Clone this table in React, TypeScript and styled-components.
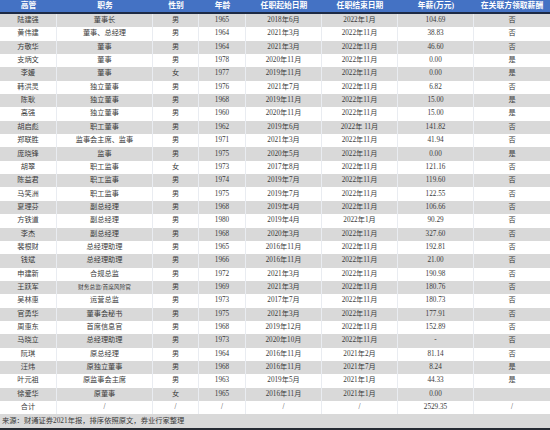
import React from "react";
import styled, { createGlobalStyle } from "styled-components";

const Global = createGlobalStyle`
  html, body { margin: 0; padding: 0; background: #ffffff; }
  body { width: 550px; height: 430px; overflow: hidden; }
`;

const WIDTHS = [57, 96, 46, 47, 76, 76, 76, 76];

const Sheet = styled.div`
  width: 550px;
  height: 430px;
  display: flex;
  flex-direction: column;
  font-family: "Liberation Serif", "Noto Sans CJK SC", serif;
  color: #3a3a3a;
  border-bottom: 2px solid #262b33;
  box-sizing: border-box;
  overflow: hidden;
`;

const HeaderRow = styled.div`
  display: flex;
  height: 12px;
  background: #4472c4;
  border-bottom: 2px solid #1d2a44;
  flex: none;
`;

const HeadCell = styled.div<{ $w: number }>`
  flex: 0 0 ${(p) => p.$w}px;
  display: flex;
  align-items: center;
  justify-content: center;
  color: #ffffff;
  font-weight: bold;
  font-size: 7.8px;
  line-height: 1;
  white-space: nowrap;
`;

const Row = styled.div<{ $shade: boolean }>`
  display: flex;
  height: 13.35px;
  flex: none;
  background: ${(p) => (p.$shade ? "#d9d9d9" : "#ffffff")};
`;

const Cell = styled.div<{ $w: number; $small?: boolean }>`
  flex: 0 0 ${(p) => p.$w}px;
  box-sizing: border-box;
  display: flex;
  align-items: center;
  justify-content: center;
  font-size: ${(p) => (p.$small ? "5.7px" : "7.2px")};
  line-height: 1;
  white-space: nowrap;
  border-right: 1px solid #e9ecf1;
  &:last-child { border-right: none; }
`;

const SourceRow = styled.div`
  display: flex;
  align-items: center;
  height: 13.35px;
  flex: none;
  background: #d9d9d9;
  padding-left: 2px;
  font-size: 7.3px;
  line-height: 1;
  white-space: nowrap;
`;

const headers = ["高管", "职务", "性别", "年龄", "任职起始日期", "任职结束日期", "年薪(万元)", "在关联方领取薪酬"];

const rows: string[][] = [
  ["陆建强", "董事长", "男", "1965", "2018年6月", "2022年1月", "104.69", "否"],
  ["黄伟建", "董事、总经理", "男", "1964", "2021年3月", "2022年11月", "38.83", "否"],
  ["方敬华", "董事", "男", "1964", "2021年3月", "2022年11月", "46.60", "否"],
  ["支炳文", "董事", "男", "1978", "2020年11月", "2022年11月", "0.00", "是"],
  ["李媛", "董事", "女", "1977", "2019年11月", "2022年11月", "0.00", "是"],
  ["韩洪灵", "独立董事", "男", "1976", "2021年7月", "2022年11月", "6.82", "否"],
  ["陈耿", "独立董事", "男", "1968", "2019年11月", "2022年11月", "15.00", "是"],
  ["高强", "独立董事", "男", "1960", "2020年11月", "2022年11月", "15.00", "是"],
  ["胡启彪", "职工董事", "男", "1962", "2019年6月", "2022年 11月", "141.82", "否"],
  ["郑联胜", "监事会主席、监事", "男", "1971", "2021年3月", "2022年11月", "41.94", "否"],
  ["庞晓锋", "监事", "男", "1975", "2020年5月", "2022年11月", "0.00", "是"],
  ["胡翠", "职工监事", "女", "1973", "2017年8月", "2022年11月", "121.16", "否"],
  ["陈益君", "职工监事", "男", "1974", "2019年7月", "2022年11月", "119.60", "否"],
  ["马笑洲", "职工监事", "男", "1975", "2019年7月", "2022年11月", "122.55", "否"],
  ["夏理芬", "副总经理", "男", "1968", "2019年4月", "2022年11月", "106.66", "否"],
  ["方铁道", "副总经理", "男", "1980", "2019年4月", "2022年1月", "90.29", "否"],
  ["李杰", "副总经理", "男", "1968", "2020年3月", "2022年11月", "327.60", "否"],
  ["裴根财", "总经理助理", "男", "1965", "2016年11月", "2022年11月", "192.81", "否"],
  ["钱斌", "总经理助理", "男", "1966", "2016年11月", "2022年11月", "21.00", "否"],
  ["申建新", "合规总监", "男", "1972", "2021年3月", "2022年11月", "190.98", "否"],
  ["王跃军", "财务总监/首席风险官", "男", "1969", "2021年3月", "2022年11月", "180.76", "否"],
  ["吴林惠", "运营总监", "男", "1973", "2017年7月", "2022年11月", "180.73", "否"],
  ["官勇华", "董事会秘书", "男", "1975", "2021年3月", "2022年11月", "177.91", "否"],
  ["周惠东", "首席信息官", "男", "1968", "2019年12月", "2022年11月", "152.89", "否"],
  ["马晓立", "总经理助理", "男", "1973", "2020年10月", "2022年11月", "-", "否"],
  ["阮琪", "原总经理", "男", "1964", "2016年11月", "2021年2月", "81.14", "否"],
  ["汪炜", "原独立董事", "男", "1968", "2016年11月", "2021年7月", "8.24", "是"],
  ["叶元祖", "原监事会主席", "男", "1963", "2019年5月", "2021年1月", "44.33", "是"],
  ["徐爱华", "原董事", "女", "1965", "2016年11月", "2021年1月", "0.00", ""],
  ["合计", "/", "/", "/", "/", "/", "2529.35", "/"],
];

export default function App() {
  return (
    <>
      <Global />
      <Sheet>
        <HeaderRow>
          {headers.map((h, j) => (
            <HeadCell key={h} $w={WIDTHS[j]}>{h}</HeadCell>
          ))}
        </HeaderRow>
        {rows.map((r, i) => (
          <Row key={i} $shade={i % 2 === 0}>
            {r.map((c, j) => (
              <Cell key={j} $w={WIDTHS[j]} $small={c.length > 9}>
                {c}
              </Cell>
            ))}
          </Row>
        ))}
        <SourceRow>来源：财通证券2021年报，排序依照原文，券业行家整理</SourceRow>
      </Sheet>
    </>
  );
}
